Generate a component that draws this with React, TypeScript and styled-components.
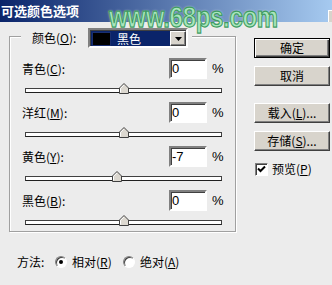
import styled, { createGlobalStyle, css } from 'styled-components';

const GlobalStyle = createGlobalStyle`
  *, *::before, *::after { box-sizing: border-box; }
  html, body { margin: 0; padding: 0; }
  body {
    background: #ececec;
    font-family: 'Liberation Sans', 'Noto Sans CJK SC', sans-serif;
    font-size: 12px;
    color: #000;
  }
`;

const FACE = '#d8d4cc';
const BG = '#ececec';

const Dialog = styled.div`
  position: relative;
  width: 332px;
  height: 285px;
  background: ${BG};
  overflow: hidden;
`;

const TitleBar = styled.div`
  height: 22px;
  display: flex;
  align-items: center;
  justify-content: space-between;
  background: linear-gradient(to right, #0a246a, #a6caf0);
  overflow: hidden;
`;

const Title = styled.div`
  padding-left: 1px;
  color: #fff;
  font-family: 'Noto Sans CJK SC', sans-serif;
  font-weight: 700;
  font-size: 13px;
  line-height: 14px;
`;

const TitleButton = styled.div`
  align-self: flex-end;
  width: 16px;
  height: 12px;
  margin-right: -12px;
  background: ${FACE};
  border-left: 1px solid #fff;
  border-top: 1px solid #fff;
`;

// the site watermark lies over the title bar and the dropdown
const Watermark = styled.div`
  position: absolute;
  top: 2px;
  left: 109px;
  font-family: 'Liberation Sans', sans-serif;
  font-weight: 700;
  font-size: 24px;
  line-height: 1;
  letter-spacing: -0.3px;
  color: #a8e6bc;
  -webkit-text-stroke: 1px #3f9c62;
  text-shadow: 0 0 2px rgba(255, 255, 255, 0.9);
  transform: scale(1, 1.25);
  transform-origin: top left;
  pointer-events: none;
`;

const Body = styled.div`
  display: flex;
`;

const LeftCol = styled.div`
  width: 227px;
  margin-left: 9px;
  display: flex;
  flex-direction: column;
`;

const GroupBox = styled.div`
  margin-top: 14px;
  height: 196px;
  border: 1px solid #a0a0a0;
  box-shadow: inset 1px 1px 0 #fff, 1px 1px 0 #fff;
`;

const GroupHeader = styled.div`
  display: flex;
  align-items: center;
  width: fit-content;
  height: 20px;
  margin: -9px 0 0 11px;
  padding: 0 4px 0 11px;
  background: ${BG};
`;

const HeaderLabel = styled.span`
  width: 56px;
  font-family: 'Noto Sans CJK SC', sans-serif;
  font-size: 12px;
  line-height: 14px;
`;

const Dropdown = styled.div`
  display: flex;
  width: 100px;
  height: 20px;
  border: 2px solid;
  border-color: #808080 #fff #fff #808080;
  box-shadow: inset 1px 1px 0 #404040;
  background: #fff;
  padding: 1px 0 0 1px;
`;

const DropValue = styled.div`
  flex: 1;
  display: flex;
  align-items: center;
  background: #0a246a;
  padding-left: 1px;
`;

const Swatch = styled.span`
  width: 19px;
  height: 14px;
  background: #000;
  border: 1px solid #1a2f70;
`;

const DropText = styled.span`
  margin-left: 6px;
  color: #fff;
  font-family: 'Noto Sans CJK SC', sans-serif;
  font-size: 12px;
  line-height: 14px;
`;

const DropArrow = styled.div`
  width: 16px;
  display: flex;
  align-items: center;
  justify-content: center;
  background: ${FACE};
  border: 1px solid;
  border-color: #fff #404040 #404040 #fff;
  box-shadow: inset -1px -1px 0 #808080;
`;

const Channels = styled.div`
  margin-top: 10px;
  padding-left: 12px;
`;

const ChannelRow = styled.div`
  height: 44px;
`;

const FieldLine = styled.div`
  display: flex;
  align-items: center;
  height: 21px;
`;

const Label = styled.span`
  width: 147px;
  font-family: 'Noto Sans CJK SC', sans-serif;
  font-size: 12px;
  line-height: 14px;
`;

const NumberBox = styled.div`
  width: 38px;
  height: 21px;
  padding-left: 1px;
  display: flex;
  align-items: center;
  background: #fff;
  border: 2px solid;
  border-color: #808080 #fff #fff #808080;
  box-shadow: inset 1px 1px 0 #404040;
  font-family: 'Liberation Sans', sans-serif;
  font-size: 13px;
`;

const Percent = styled.span`
  margin-left: 5px;
  font-family: 'Liberation Sans', sans-serif;
  font-size: 13px;
`;

const SliderTrack = styled.div`
  position: relative;
  width: 197px;
  height: 5px;
  margin: 9px 0 0 3px;
  background: #fff;
  border: 1px solid;
  border-color: #404040 #404040 #202020 #404040;
`;

const Thumb = styled.svg`
  position: absolute;
  top: -6px;
  display: block;
`;

const MethodRow = styled.div`
  display: flex;
  align-items: center;
  height: 16px;
  margin-top: 22px;
  padding-left: 8px;
  font-family: 'Noto Sans CJK SC', sans-serif;
  font-size: 12px;
  line-height: 14px;
`;

const MethodLabel = styled.span`
  width: 38px;
`;

const Radio = styled.span<{ $checked?: boolean }>`
  width: 12px;
  height: 12px;
  margin-right: 5px;
  border-radius: 50%;
  border: 1px solid;
  border-color: #808080 #fff #fff #808080;
  background: #fff;
  box-shadow: inset 1px 1px 0 #404040;
  display: flex;
  align-items: center;
  justify-content: center;
  ${(p) =>
    p.$checked &&
    css`
      &::after {
        content: '';
        width: 4px;
        height: 4px;
        border-radius: 50%;
        background: #000;
      }
    `}
`;

const RadioText = styled.span<{ $width?: number }>`
  width: ${(p) => (p.$width ? `${p.$width}px` : 'auto')};
`;

const RightCol = styled.div`
  width: 76px;
  margin: 16px 0 0 18px;
  display: flex;
  flex-direction: column;
`;

const Button = styled.div<{ $default?: boolean; $gap: number }>`
  height: 20px;
  margin-top: ${(p) => p.$gap}px;
  display: flex;
  align-items: center;
  justify-content: center;
  background: ${FACE};
  border: 1px solid;
  border-color: #fff #404040 #404040 #fff;
  box-shadow: inset -1px -1px 0 #808080;
  font-family: 'Noto Sans CJK SC', sans-serif;
  font-size: 12px;
  line-height: 14px;
  ${(p) =>
    p.$default &&
    css`
      border-color: #000;
      box-shadow: inset 1px 1px 0 #fff, inset -1px -1px 0 #404040,
        inset -2px -2px 0 #808080;
    `}
`;

const CheckRow = styled.div`
  display: flex;
  align-items: center;
  margin: 11px 0 0 1px;
  font-family: 'Noto Sans CJK SC', sans-serif;
  font-size: 12px;
  line-height: 14px;
`;

const CheckBox = styled.span`
  width: 13px;
  height: 13px;
  margin-right: 4px;
  display: flex;
  align-items: center;
  justify-content: center;
  background: #fff;
  border: 1px solid;
  border-color: #808080 #fff #fff #808080;
  box-shadow: inset 1px 1px 0 #404040;
`;

const channels = [
  { name: '青色', key: 'C', value: 0 },
  { name: '洋红', key: 'M', value: 0 },
  { name: '黄色', key: 'Y', value: -7 },
  { name: '黑色', key: 'B', value: 0 },
];

const SliderThumb = ({ value }: { value: number }) => (
  <Thumb width="10" height="11" viewBox="0 0 10 11" style={{ left: 93 + value * 0.985 }}>
    <polygon points="0.5,10.5 0.5,5 5,0.5 9.5,5 9.5,10.5" fill="#dcd8d0" stroke="#404040" />
    <polyline points="1.5,9.5 1.5,5.4 5,1.9" fill="none" stroke="#fff" />
  </Thumb>
);

export default function App() {
  return (
    <Dialog>
      <GlobalStyle />
      <TitleBar>
        <Title>可选颜色选项</Title>
        <TitleButton />
      </TitleBar>
      <Body>
        <LeftCol>
          <GroupBox>
            <GroupHeader>
              <HeaderLabel>
                颜色(<u>O</u>):
              </HeaderLabel>
              <Dropdown>
                <DropValue>
                  <Swatch />
                  <DropText>黑色</DropText>
                </DropValue>
                <DropArrow>
                  <svg width="7" height="4" viewBox="0 0 7 4">
                    <polygon points="0,0 7,0 3.5,4" fill="#000" />
                  </svg>
                </DropArrow>
              </Dropdown>
            </GroupHeader>
            <Channels>
              {channels.map((c) => (
                <ChannelRow key={c.key}>
                  <FieldLine>
                    <Label>
                      {c.name}(<u>{c.key}</u>):
                    </Label>
                    <NumberBox>{c.value}</NumberBox>
                    <Percent>%</Percent>
                  </FieldLine>
                  <SliderTrack>
                    <SliderThumb value={c.value} />
                  </SliderTrack>
                </ChannelRow>
              ))}
            </Channels>
          </GroupBox>
          <MethodRow>
            <MethodLabel>方法:</MethodLabel>
            <Radio $checked />
            <RadioText $width={51}>
              相对(<u>R</u>)
            </RadioText>
            <Radio />
            <RadioText>
              绝对(<u>A</u>)
            </RadioText>
          </MethodRow>
        </LeftCol>
        <RightCol>
          <Button $default $gap={0}>确定</Button>
          <Button $gap={8}>取消</Button>
          <Button $gap={17}>
            载入(<u>L</u>)...
          </Button>
          <Button $gap={8}>
            存储(<u>S</u>)...
          </Button>
          <CheckRow>
            <CheckBox>
              <svg width="9" height="8" viewBox="0 0 9 8">
                <polyline points="1,3.5 3.5,6 8,1.5" fill="none" stroke="#000" strokeWidth="2" />
              </svg>
            </CheckBox>
            预览(<u>P</u>)
          </CheckRow>
        </RightCol>
      </Body>
      <Watermark>www.68ps.com</Watermark>
    </Dialog>
  );
}
